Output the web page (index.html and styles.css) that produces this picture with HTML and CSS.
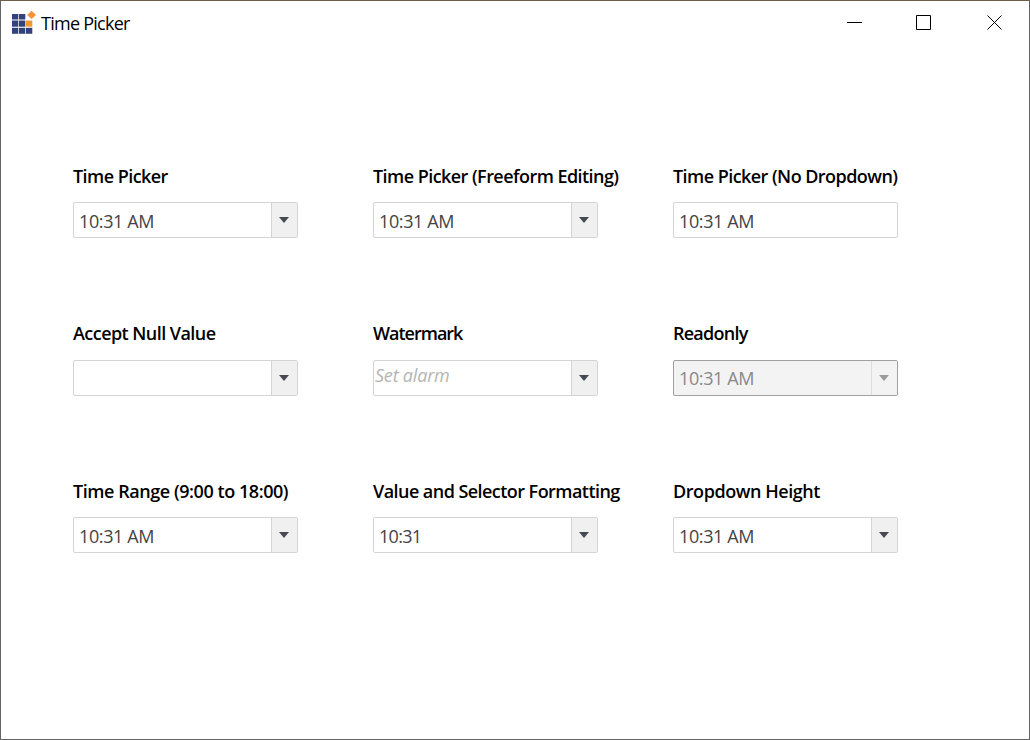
FILE: index.html
```
<!DOCTYPE html>
<html lang="en">
<head>
<meta charset="utf-8">
<title>Time Picker</title>
<link rel="stylesheet" href="styles.css">
</head>
<body>
<div class="window">
  <header class="titlebar">
    <svg class="logo" width="24" height="24" viewBox="0 0 24 24">
      <g fill="#34427b">
        <rect x="0" y="3" width="6.300" height="5.500"/><rect x="7" y="3" width="6.300" height="5.500"/>
        <rect x="0" y="9.500" width="6.300" height="6.200"/><rect x="7" y="9.500" width="6.300" height="6.200"/>
        <rect x="0" y="16.800" width="6.300" height="6"/><rect x="7" y="16.800" width="6.300" height="6"/><rect x="14" y="16.800" width="6.300" height="6"/>
      </g>
      <g fill="#f79434"><rect x="14" y="9.500" width="6.300" height="6.200"/><path d="M19.600 -.3 24 3.900 19.600 8 15.200 3.900z"/></g>
    </svg>
    <h1 class="title">Time Picker</h1>
    <div class="controls">
      <svg width="16" height="16" viewBox="0 0 16 16"><path d="M0 8.500h15" stroke="#000"/></svg>
      <svg class="maximize" width="16" height="16" viewBox="0 0 16 16"><path d="M.5 1.500h14v14H.5z" fill="none" stroke="#000"/></svg>
      <svg width="16" height="16" viewBox="0 0 16 16"><path d="M.5 1.500l14 14M14.500 1.500l-14 14" stroke="#000"/></svg>
    </div>
  </header>
  <main class="grid">
    <section class="field"><h2 class="label">Time Picker</h2><div class="picker"><span class="value">10:31 AM</span><span class="drop"><i class="arrow"></i></span></div></section>
    <section class="field"><h2 class="label">Time Picker (Freeform Editing)</h2><div class="picker"><span class="value">10:31 AM</span><span class="drop"><i class="arrow"></i></span></div></section>
    <section class="field"><h2 class="label">Time Picker (No Dropdown)</h2><div class="picker"><span class="value">10:31 AM</span></div></section>
    <section class="field middle"><h2 class="label">Accept Null Value</h2><div class="picker"><span class="value"></span><span class="drop"><i class="arrow"></i></span></div></section>
    <section class="field middle"><h2 class="label tight">Watermark</h2><div class="picker"><span class="value watermark">Set alarm</span><span class="drop"><i class="arrow"></i></span></div></section>
    <section class="field middle"><h2 class="label snug">Readonly</h2><div class="picker readonly"><span class="value">10:31 AM</span><span class="drop"><i class="arrow"></i></span></div></section>
    <section class="field"><h2 class="label loose">Time Range (9:00 to 18:00)</h2><div class="picker"><span class="value">10:31 AM</span><span class="drop"><i class="arrow"></i></span></div></section>
    <section class="field"><h2 class="label">Value and Selector Formatting</h2><div class="picker"><span class="value short">10:31</span><span class="drop"><i class="arrow"></i></span></div></section>
    <section class="field"><h2 class="label loose">Dropdown Height</h2><div class="picker"><span class="value">10:31 AM</span><span class="drop"><i class="arrow"></i></span></div></section>
  </main>
</div>
</body>
</html>
```
FILE: styles.css
```
* { box-sizing: border-box; }
body { margin: 0; background: #fff; font-family: "Open Sans", "Noto Sans", sans-serif; }
.window {
  width: 1030px; height: 740px;
  border: 1px solid #646464; border-top-color: #705e4b;
  background: #fff; overflow: hidden;
}
.titlebar { display: flex; height: 44px; padding: 0 26px 0 11px; }
.logo { margin-top: 10px; overflow: visible; }
.title { margin: 0 0 0 5px; font-size: 18px; font-weight: 400; line-height: 45px; letter-spacing: -0.74px; color: #000; }
.controls { display: flex; margin: 13px 0 0 auto; }
.maximize { margin: 0 55px 0 53px; }
.grid {
  display: grid; grid-template-columns: repeat(3, 300px);
  grid-template-rows: 158px 157px 100px;
  padding: 119px 0 0 72px;
}
.label { margin: 0; height: 38px; line-height: 24px; font-size: 18px; font-weight: 600; letter-spacing: -0.55px; color: #000; white-space: nowrap; }
.snug { letter-spacing: -0.75px; }
.tight { letter-spacing: -1px; }
.loose { letter-spacing: -0.44px; }
.picker { display: flex; width: 225px; height: 36px; border: 1px solid #d4d4d4; border-radius: 2px; background: #fff; }
.value { flex: 1; padding-left: 5px; font-size: 18px; line-height: 37px; letter-spacing: -0.38px; color: #444; white-space: nowrap; }
.short { letter-spacing: -0.7px; }
.middle .label { line-height: 22px; }
.middle .value { line-height: 35px; }
.middle .watermark { padding-left: 1px; line-height: 29px; letter-spacing: -0.2px; font-style: italic; color: #b4b4b4; }
.drop { width: 26px; border-left: 1px solid #d4d4d4; background: #f0f0f0; display: flex; padding: 14px 0 0 7px; }
.arrow { width: 10px; height: 6px; background: #464a50; clip-path: polygon(0 0, 100% 0, 50% 100%); }
.readonly { border-color: #a0a0a0; background: #f3f3f3; }
.readonly .value { color: #888; }
.readonly .drop { background: #f3f3f3; border-left-color: #dedede; }
.readonly .arrow { background: #9b9b9b; }
```
